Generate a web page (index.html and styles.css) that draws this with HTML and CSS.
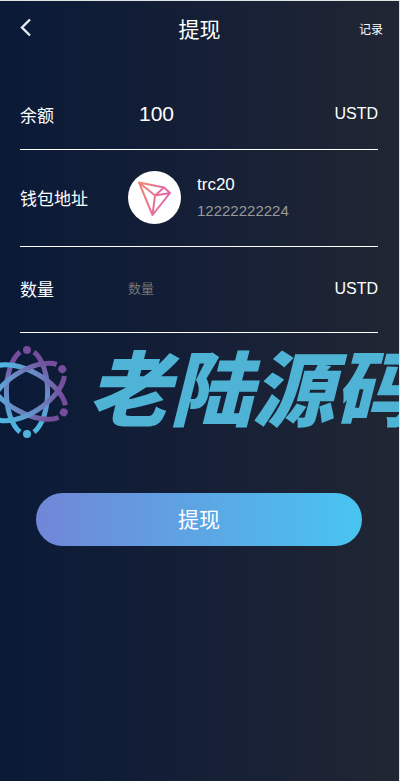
FILE: index.html
```html
<!DOCTYPE html>
<html lang="zh-CN">
<head>
    <meta charset="UTF-8">
    <meta name="viewport" content="width=device-width, initial-scale=1.0">
    <title>提现</title>
    <link rel="stylesheet" href="styles.css">
</head>
<body>
    <div class="page">
        <header class="header">
            <button class="back-button" type="button" aria-label="返回">
                <svg width="12" height="20" viewBox="0 0 12 20" fill="none" stroke="#e8eaf2" stroke-width="2.4">
                    <path d="M10 1.5 L2 9.5 L10 17.5"/>
                </svg>
            </button>
            <h1 class="title">提现</h1>
            <a class="record-link" href="#">记录</a>
        </header>

        <form class="withdraw-form">
            <!-- Balance -->
            <div class="row balance-row">
                <span class="label">余额</span>
                <span class="balance">100</span>
                <span class="unit">USTD</span>
            </div>

            <!-- Wallet address -->
            <div class="row wallet-row">
                <span class="label">钱包地址</span>
                <div class="wallet">
                    <svg class="coin" width="53" height="53" viewBox="0 0 53 53">
                        <defs>
                            <linearGradient id="tron" gradientUnits="userSpaceOnUse" x1="11" y1="20" x2="42" y2="26">
                                <stop offset="0" stop-color="#ee8577"/>
                                <stop offset="1" stop-color="#e262ae"/>
                            </linearGradient>
                        </defs>
                        <circle cx="26.5" cy="26.5" r="26.5" fill="#fff"/>
                        <path d="M11 11.5 L36 16.5 L42 22 L24.5 44 Z M11 11.5 L27 24.5 L24.5 44 M36 16.5 L27 24.5 L42 22" fill="none" stroke="url(#tron)" stroke-width="2" stroke-linejoin="round"/>
                    </svg>
                    <div class="wallet-details">
                        <div class="wallet-name">trc20</div>
                        <div class="wallet-address">12222222224</div>
                    </div>
                </div>
            </div>

            <!-- Amount -->
            <div class="row amount-row">
                <label class="label" for="amount">数量</label>
                <input class="amount-input" id="amount" type="text" placeholder="数量">
                <span class="unit">USTD</span>
            </div>

            <div class="brand">
                <svg class="brand-logo" width="70" height="94" viewBox="0 0 70 94">
                    <defs>
                        <linearGradient id="orbit-color" gradientUnits="userSpaceOnUse" x1="0" y1="-42" x2="0" y2="42">
                            <stop offset="0.1" stop-color="#744d9c"/>
                            <stop offset="0.5" stop-color="#6b88c4"/>
                            <stop offset="0.9" stop-color="#4fb5e0"/>
                        </linearGradient>
                        <g id="orbit">
                            <path d="M7 -40 A21.5 43 0 0 1 7 40 M-7 -40 A21.5 43 0 0 0 -7 40" fill="none" stroke="url(#orbit-color)" stroke-width="5"/>
                            <circle cx="0" cy="-42" r="4" fill="#744d9c"/>
                            <circle cx="0" cy="42" r="4" fill="#4fb5d8"/>
                        </g>
                    </defs>
                    <use href="#orbit" transform="translate(27 47)"/>
                    <use href="#orbit" transform="translate(27 47) rotate(119)"/>
                    <use href="#orbit" transform="translate(27 47) rotate(57)"/>
                </svg>
                <span class="brand-name">老陆源码</span>
            </div>

            <button class="submit-button" type="button">提现</button>
        </form>
    </div>
</body>
</html>
```
FILE: styles.css
```css
* {
    box-sizing: border-box;
}

body {
    margin: 0;
    font-family: "Liberation Sans", "Noto Sans CJK SC", sans-serif;
    color: #fff;
}

.page {
    min-height: 100vh;
    overflow: hidden;
    border-top: 1px solid #dfe5e5;
    border-right: 1px solid #dfe5e5;
    background: linear-gradient(to right, #0a1a37, #151f36 50%, #202633);
}

.header {
    display: grid;
    grid-template-columns: 1fr auto 1fr;
    align-items: center;
    height: 54px;
    padding: 0 16px;
}

.back-button {
    display: flex;
    justify-self: start;
    padding: 0 4px;
    border: none;
    background: none;
    cursor: pointer;
}

.title {
    margin: 0;
    font-size: 21px;
    font-weight: normal;
}

.record-link {
    justify-self: end;
    color: #fff;
    font-size: 12px;
    text-decoration: none;
}

.withdraw-form {
    display: flex;
    flex-direction: column;
    padding-top: 24px;
}

.row {
    display: grid;
    grid-template-columns: 108px 1fr auto;
    align-items: center;
    margin: 0 21px 0 20px;
    padding-bottom: 2px;
    border-bottom: 1px solid #fff;
}

.balance-row {
    height: 71px;
    padding-bottom: 0;
}

.wallet-row {
    height: 97px;
}

.amount-row {
    height: 86px;
}

.label {
    font-size: 17px;
}

.balance {
    padding-left: 11px;
    font-size: 21px;
}

.unit {
    font-size: 16px;
}

.wallet {
    display: flex;
    align-items: center;
    gap: 16px;
}

.wallet-name {
    padding-top: 2px;
    font-size: 17px;
    line-height: 26px;
}

.wallet-address {
    color: #999;
    font-size: 15px;
    line-height: 26px;
}

.amount-input {
    width: 100%;
    min-width: 0;
    padding: 0;
    border: none;
    outline: none;
    background: none;
    color: #fff;
    font-family: inherit;
    font-size: 13px;
}

.amount-input::placeholder {
    color: #757575;
}

.brand {
    display: flex;
    align-items: flex-start;
    gap: 18px;
    height: 94px;
    margin-top: 12px;
    overflow: hidden;
}

.brand-logo {
    flex: none;
}

.brand-name {
    flex: none;
    color: #4fb3d6;
    font-family: "Noto Sans CJK SC", sans-serif;
    font-size: 82px;
    font-style: italic;
    font-weight: 900;
    line-height: 80px;
    white-space: nowrap;
}

.submit-button {
    height: 53px;
    margin: 54px 37px 0 36px;
    padding: 0 0 4px;
    border: none;
    border-radius: 27px;
    background: linear-gradient(to right, #7186d8, #48c5f0);
    color: #fff;
    font-family: inherit;
    font-size: 21px;
    cursor: pointer;
}
```
